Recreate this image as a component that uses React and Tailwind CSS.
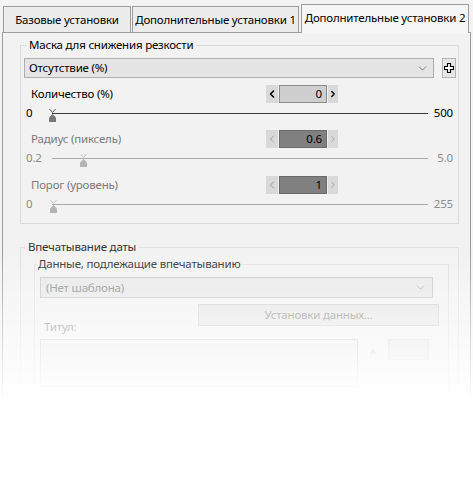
import { ChevronDown, ChevronLeft, ChevronRight } from "lucide-react"

function Thumb({ dim }) {
    const c = dim ? "#b4b4b4" : "#777777"
    return (
        <svg width="9" height="15" viewBox="0 0 9 15">
            <path d="M1.5 1 L4.5 4.5 L7.5 1" stroke={dim ? "#c4c4c4" : "#555"} strokeWidth="1" fill="none" />
            <path d="M4.5 6 L8 9.5 L8 14 L1 14 L1 9.5 Z" fill={c} />
        </svg>
    )
}

function Spinner({ value, dim }) {
    return (
        <div className="mr-[120px] flex h-[18px] items-center">
            <div className="flex h-[18px] w-[12px] items-center justify-center bg-[#d9d9d9]">
                <ChevronLeft size={14} strokeWidth={dim ? 1.6 : 3.2} className={dim ? "text-[#8a8a8a]" : "text-black"} />
            </div>
            <div
                className={`ml-[1px] flex h-[18px] w-[48px] items-center justify-end border pr-[4px] text-black ${
                    dim ? "border-[#6a6a6a] bg-[#808080]" : "border-[#8a8a8a] bg-[#cfcfcf]"
                }`}
            >
                {value}
            </div>
            <div className="ml-[1px] flex h-[18px] w-[10px] items-center justify-center bg-[#d9d9d9]">
                <ChevronRight size={14} strokeWidth={dim ? 1.6 : 3.2} className={dim ? "text-[#8a8a8a]" : "text-black"} />
            </div>
        </div>
    )
}

function SliderRow({ min, max, pos, dim }) {
    return (
        <div className={`flex h-[18px] items-center pl-[5px] ${dim ? "text-[#8c8c8c]" : "text-black"}`}>
            <span className="w-[26px]">{min}</span>
            <div className={`relative h-px w-[376px] ${dim ? "bg-[#a8a8a8]" : "bg-[#3a3a3a]"}`}>
                <div className="absolute -top-[5px]" style={{ left: pos - 4 }}>
                    <Thumb dim={dim} />
                </div>
            </div>
            <span className="w-[25px] text-right">{max}</span>
        </div>
    )
}

function ParamRow({ label, value, dim }) {
    return (
        <div className="flex h-[18px] items-center pl-[10px]">
            <span className={`flex-1 ${dim ? "text-[#7a7a7a]" : "text-black"}`}>{label}</span>
            <Spinner value={value} dim={dim} />
        </div>
    )
}

export default function App() {
    return (
        <div className="relative h-[479px] w-[473px] overflow-hidden whitespace-nowrap bg-[#f3f3f3] font-['Noto_Sans',sans-serif] text-[11.5px] leading-[16px] tracking-[-0.2px] text-black">
            <div className="flex items-end pl-[3px] pt-[4px]">
                <div className="flex h-[26px] w-[128px] items-center justify-center border border-b-0 border-[#9c9c9c] bg-[#ececec] pt-[1px]">
                    Базовые установки
                </div>
                <div className="ml-[1px] flex h-[26px] w-[167px] items-center justify-center border border-b-0 border-[#9c9c9c] bg-[#ececec] pt-[1px]">
                    Дополнительные установки 1
                </div>
                <div className="relative z-10 -mb-px ml-[2px] flex h-[29px] w-[168px] items-center justify-center border border-b-0 border-[#9c9c9c] bg-[#f6f6f6] pb-[2px]">
                    Дополнительные установки 2
                </div>
            </div>

            <div className="ml-[2px] h-[460px] w-[469px] border border-b-0 border-[#9c9c9c] bg-[#f2f2f2] pt-[4px]">
                <fieldset className="ml-[17px] w-[439px] border border-[#dadada] pb-[10px]">
                    <legend className="ml-[5px] px-[3px] leading-[16px]">Маска для снижения резкости</legend>
                    <div className="mt-[5px] flex items-center pl-[3px]">
                        <div className="flex h-[20px] w-[410px] items-center justify-between border border-[#adadad] bg-[#e5e5e5] pl-[4px] pr-[4px]">
                            <span>Отсутствие (%)</span>
                            <ChevronDown size={13} strokeWidth={1.3} className="text-[#555]" />
                        </div>
                        <div className="ml-[8px] flex h-[20px] w-[14px] items-center justify-center border border-[#b4b4b4] bg-[#e6e6e6]">
                            <svg width="10" height="10" viewBox="0 0 10 10">
                                <path d="M3.5 0.5 H6.5 V3.5 H9.5 V6.5 H6.5 V9.5 H3.5 V6.5 H0.5 V3.5 H3.5 Z" fill="#fff" stroke="#000" strokeWidth="1.2" />
                            </svg>
                        </div>
                    </div>

                    <div className="mt-[7px]">
                        <ParamRow label="Количество (%)" value="0" />
                        <div className="mt-px">
                            <SliderRow min="0" max="500" pos={0} />
                        </div>
                    </div>
                    <div className="mt-[8px]">
                        <ParamRow label="Радиус (пиксель)" value="0.6" dim />
                        <div className="mt-px">
                            <SliderRow min="0.2" max="5.0" pos={31} dim />
                        </div>
                    </div>
                    <div className="mt-[9px]">
                        <ParamRow label="Порог (уровень)" value="1" dim />
                        <div className="mt-px">
                            <SliderRow min="0" max="255" pos={1} dim />
                        </div>
                    </div>
                </fieldset>

                <fieldset className="ml-[17px] mt-[15px] w-[439px] border border-[#e0e0e0] pb-[8px]">
                    <legend className="ml-[4px] px-[3px] text-[#333]">Впечатывание даты</legend>
                    <fieldset className="ml-[13px] mr-[9px] mt-px border border-[#e0e0e0] pb-[8px]">
                        <legend className="ml-[2px] px-[1px] text-[#333]">Данные, подлежащие впечатыванию</legend>
                        <div className="ml-[5px] mt-[5px] flex h-[21px] w-[393px] items-center justify-between border border-[#c8c8c8] bg-[#e8e8e8] pl-[5px] pr-[5px] text-[#8a8a8a]">
                            <span>(Нет шаблона)</span>
                            <ChevronDown size={13} strokeWidth={1.3} className="text-[#999]" />
                        </div>
                        <div className="ml-[163px] mt-[6px] flex h-[22px] w-[241px] items-center justify-center border border-[#d0d0d0] bg-[#e6e6e6] text-[#8c8c8c]">
                            Установки данных...
                        </div>
                        <div className="-mt-[7px] ml-[9px] h-[16px] text-[#8c8c8c]">Титул:</div>
                        <div className="mt-[4px] flex items-start">
                            <div className="ml-[5px] h-[48px] w-[318px] border border-[#c8c8c8] bg-[#ececec]" />
                            <div className="ml-[12px] mt-[6px] text-[10px] text-[#aaa]">^</div>
                            <div className="ml-[12px] h-[21px] w-[41px] border border-[#d8d8d8] bg-[#e6e6e6]" />
                        </div>
                    </fieldset>
                </fieldset>
            </div>

            <div className="pointer-events-none absolute inset-x-0 top-[250px] bottom-0 bg-[linear-gradient(to_bottom,rgba(255,255,255,0)_0px,#ffffff_150px)]" />
        </div>
    )
}
